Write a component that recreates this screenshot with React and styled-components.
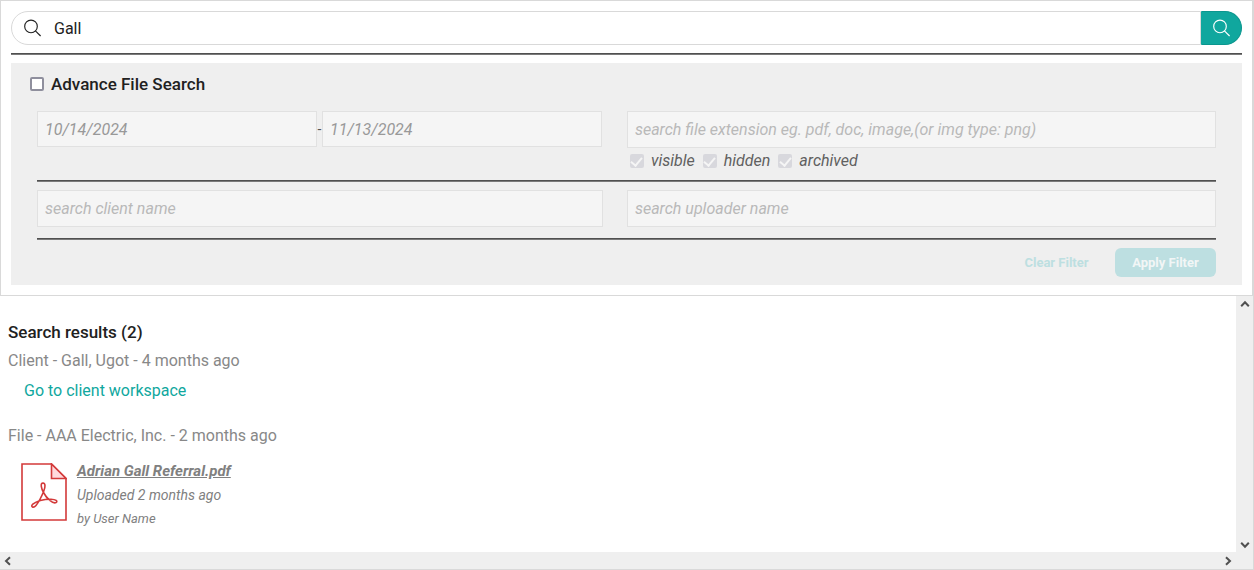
import React, { useState } from "react";
import styled, { createGlobalStyle } from "styled-components";

const GlobalStyle = createGlobalStyle`
  * {
    box-sizing: border-box;
  }

  body {
    margin: 0;
    background: #fff;
    font-family: Roboto, "Liberation Sans", sans-serif;
    font-size: 16px;
    line-height: 24px;
    color: #212121;
  }

  input, button {
    font-family: inherit;
  }
`;

const Window = styled.div`
  display: flex;
  flex-direction: column;
  min-height: 100vh;
  border-right: 1px solid #d9d9d9;
  border-bottom: 1px solid #d9d9d9;
`;

const SearchPanel = styled.section`
  display: flex;
  flex-direction: column;
  padding: 10px;
  border: 1px solid #d9d9d9;
`;

const SearchBar = styled.form`
  display: flex;
  height: 34px;
`;

const SearchField = styled.label`
  display: flex;
  flex: 1;
  align-items: center;
  gap: 12px;
  padding-left: 12px;
  border: 1px solid #d9d9d9;
  border-radius: 17px 0 0 17px;
`;

const SearchInput = styled.input`
  flex: 1;
  min-width: 0;
  height: 24px;
  padding: 0;
  border: 0;
  outline: none;
  background: transparent;
  font-size: 16px;
  color: #212121;
`;

const SearchButton = styled.button`
  display: flex;
  align-items: center;
  width: 41px;
  padding: 0 0 0 11px;
  border: 1px solid #0b968e;
  border-left-color: #10a79e;
  border-radius: 0 17px 17px 0;
  background: #10a79e;
  color: #fff;
`;

const Rule = styled.hr`
  width: 100%;
  height: 2px;
  margin: 8px 0;
  border: 0;
  border-top: 1px solid #505050;
  background: #7a7a7a;
`;

const FilterBox = styled.fieldset`
  min-width: 0;
  margin: 0;
  padding: 9px 26px 8px;
  border: 0;
  background: #efefef;
`;

const AdvanceLabel = styled.label`
  display: flex;
  align-items: center;
  gap: 7px;
  margin-left: -7px;
  font-size: 17px;
  font-weight: 500;
`;

const Checkbox = styled.input.attrs({ type: "checkbox" })`
  appearance: none;
  display: flex;
  justify-content: center;
  flex: none;
  width: 14px;
  height: 14px;
  margin: 0;
  border: 2px solid #8f8f9d;
  border-radius: 2px;
  background: #fff;

  &:checked {
    border-color: #d8d8dd;
    background: #d8d8dd;
  }

  &:checked::after {
    content: "";
    flex: none;
    width: 5px;
    height: 9px;
    border: solid #f5f5f5;
    border-width: 0 2px 2px 0;
    transform: translateY(-1px) rotate(40deg);
  }
`;

const FilterRow = styled.div`
  display: grid;
  grid-template-columns: 49fr 51fr;
  gap: 24px;
  padding: ${(props) => props.$padding || "0"};
`;

const DateRange = styled.div`
  display: flex;
  align-items: flex-start;
  padding-right: 1px;
  line-height: 36px;
  color: #555;
`;

const Dash = styled.span`
  width: 5px;
  text-align: center;
  font-size: 14px;
`;

const Field = styled.input`
  flex: 1;
  width: 100%;
  min-width: 0;
  height: ${(props) => (props.$date ? 36 : 37)}px;
  padding: 0 7px;
  border: 1px solid #e1e1e1;
  border-radius: 0;
  background: #f5f5f5;
  font-size: 16px;
  font-style: italic;
  color: #999;

  &::placeholder {
    color: #b9b9b9;
    opacity: 1;
  }
`;

const StatusList = styled.div`
  display: flex;
  gap: 8px;
  padding: 2px 0 0 3px;
  line-height: 22px;
`;

const StatusLabel = styled.label`
  display: flex;
  align-items: center;
  gap: 7px;
  font-style: italic;
  color: #606060;
`;

const Actions = styled.div`
  display: flex;
  justify-content: flex-end;
  gap: 8px;
`;

const ActionButton = styled.button`
  min-width: 101px;
  height: 29px;
  padding: 0 16px;
  border: 0;
  border-radius: 6px;
  background: ${(props) => (props.$primary ? "#bddfe1" : "transparent")};
  color: ${(props) => (props.$primary ? "#f2f6f6" : "#bddfe1")};
  font-size: 13px;
  font-weight: 700;
`;

const ResultsPane = styled.div`
  display: grid;
  flex: 1;
  grid-template-columns: 1fr 17px;
  grid-template-rows: 1fr 17px;
`;

const Results = styled.main`
  padding: 24px 8px 16px;
`;

const ResultsTitle = styled.h2`
  margin: 0 0 5px;
  font-size: 17px;
  font-weight: 500;
`;

const ResultHeading = styled.p`
  margin: 0;
  color: #888;
`;

const WorkspaceLink = styled.a`
  display: block;
  width: fit-content;
  margin: 6px 0 21px 16px;
  color: #10a79e;
  text-decoration: none;
`;

const FileRow = styled.div`
  display: flex;
  gap: 10px;
  margin: 11px 0 0 13px;
`;

const FileInfo = styled.div`
  display: flex;
  flex-direction: column;
  font-size: 14px;
  font-style: italic;
  color: #808080;
`;

const FileLink = styled.a`
  font-size: 15px;
  font-weight: 700;
  color: #808080;
`;

const Uploader = styled.span`
  font-size: 13px;
`;

const ScrollTrack = styled.div`
  display: flex;
  flex-direction: ${(props) => (props.$horizontal ? "row" : "column")};
  justify-content: space-between;
  background: #efefef;
`;

const ScrollButton = styled.button`
  display: flex;
  align-items: center;
  justify-content: center;
  width: 17px;
  height: 17px;
  padding: 0;
  border: 0;
  background: transparent;
`;

const Corner = styled.div`
  background: #efefef;
`;

const PdfIcon = styled.svg`
  flex: none;
  margin-top: 4px;
`;

function MagnifierIcon() {
  return (
    <svg width="18" height="18" viewBox="0 0 18 18" fill="none" stroke="currentColor" strokeWidth="1.15" aria-hidden="true">
      <circle cx="7" cy="7.4" r="6.3" />
      <path d="M11.4 11.8 L16.6 17" />
    </svg>
  );
}

const arrows = {
  up: "M1.2 6.2 L5 2.2 L8.8 6.2",
  down: "M1.2 3.8 L5 7.8 L8.8 3.8",
  left: "M6 1.2 L2 5 L6 8.8",
  right: "M3 1.2 L7 5 L3 8.8",
};

function ScrollArrow({ dir }) {
  return (
    <ScrollButton type="button" aria-label={"Scroll " + dir}>
      <svg width="10" height="10" viewBox="0 0 10 10" fill="none" stroke="#505050" strokeWidth="2">
        <path d={arrows[dir]} />
      </svg>
    </ScrollButton>
  );
}

// page with a folded corner and the looped pdf mark
function PdfFile() {
  return (
    <PdfIcon width="46" height="58" viewBox="0 0 46 58" fill="none" stroke="#d33a3a" strokeWidth="1.6" aria-hidden="true">
      <path d="M1 1 H30.5 L45 15.5 V57 H1 Z" fill="#fff" />
      <path d="M30.5 1 V15.5 H45 Z" fill="#ffd9dc" />
      <path
        d="M22 20 C24.8 20.2 24.2 24.5 22.8 28 C20.8 33 18.2 38.6 15 42.4 C12.4 45.4 9 43.8 11.8 41.2 C15.8 37.8 24 36.2 30 36.2 C34.8 36.3 37.2 38.2 35 39.6 C31.8 41 25.8 35.6 22.8 30 C20.2 25.4 19 20 22 20 Z"
        strokeWidth="1.6"
      />
    </PdfIcon>
  );
}

const statuses = ["visible", "hidden", "archived"];

export default function App() {
  const [query, setQuery] = useState("Gall");
  const [advance, setAdvance] = useState(false);

  const handleSubmit = (event) => {
    event.preventDefault();
  };

  return (
    <Window>
      <GlobalStyle />
      <SearchPanel>
        <SearchBar onSubmit={handleSubmit}>
          <SearchField>
            <MagnifierIcon />
            <SearchInput
              aria-label="Search"
              type="text"
              value={query}
              onChange={(event) => setQuery(event.target.value)}
            />
          </SearchField>
          <SearchButton type="submit" aria-label="Search">
            <MagnifierIcon />
          </SearchButton>
        </SearchBar>
        <Rule />
        <FilterBox>
          <AdvanceLabel>
            <Checkbox checked={advance} onChange={(event) => setAdvance(event.target.checked)} />
            Advance File Search
          </AdvanceLabel>
          <FilterRow $padding="15px 0 0">
            <DateRange>
              <Field $date disabled={!advance} aria-label="From date" defaultValue="10/14/2024" />
              <Dash>-</Dash>
              <Field $date disabled={!advance} aria-label="To date" defaultValue="11/13/2024" />
            </DateRange>
            <div>
              <Field
                disabled={!advance}
                aria-label="File extension"
                placeholder="search file extension eg. pdf, doc, image,(or img type: png)"
              />
              <StatusList>
                {statuses.map((status) => (
                  <StatusLabel key={status}>
                    <Checkbox disabled={!advance} defaultChecked />
                    {status}
                  </StatusLabel>
                ))}
              </StatusList>
            </div>
          </FilterRow>
          <Rule />
          <FilterRow $padding="0 0 3px">
            <Field disabled={!advance} aria-label="Client name" placeholder="search client name" />
            <Field disabled={!advance} aria-label="Uploader name" placeholder="search uploader name" />
          </FilterRow>
          <Rule />
          <Actions>
            <ActionButton type="button" disabled={!advance}>Clear Filter</ActionButton>
            <ActionButton type="button" $primary disabled={!advance}>Apply Filter</ActionButton>
          </Actions>
        </FilterBox>
      </SearchPanel>
      <ResultsPane>
        <Results>
          <ResultsTitle>Search results (2)</ResultsTitle>
          <ResultHeading>Client - Gall, Ugot - 4 months ago</ResultHeading>
          <WorkspaceLink href="#workspace">Go to client workspace</WorkspaceLink>
          <ResultHeading>File - AAA Electric, Inc. - 2 months ago</ResultHeading>
          <FileRow>
            <PdfFile />
            <FileInfo>
              <FileLink href="#file">Adrian Gall Referral.pdf</FileLink>
              <span>Uploaded 2 months ago</span>
              <Uploader>by User Name</Uploader>
            </FileInfo>
          </FileRow>
        </Results>
        <ScrollTrack>
          <ScrollArrow dir="up" />
          <ScrollArrow dir="down" />
        </ScrollTrack>
        <ScrollTrack $horizontal>
          <ScrollArrow dir="left" />
          <ScrollArrow dir="right" />
        </ScrollTrack>
        <Corner />
      </ResultsPane>
    </Window>
  );
}
